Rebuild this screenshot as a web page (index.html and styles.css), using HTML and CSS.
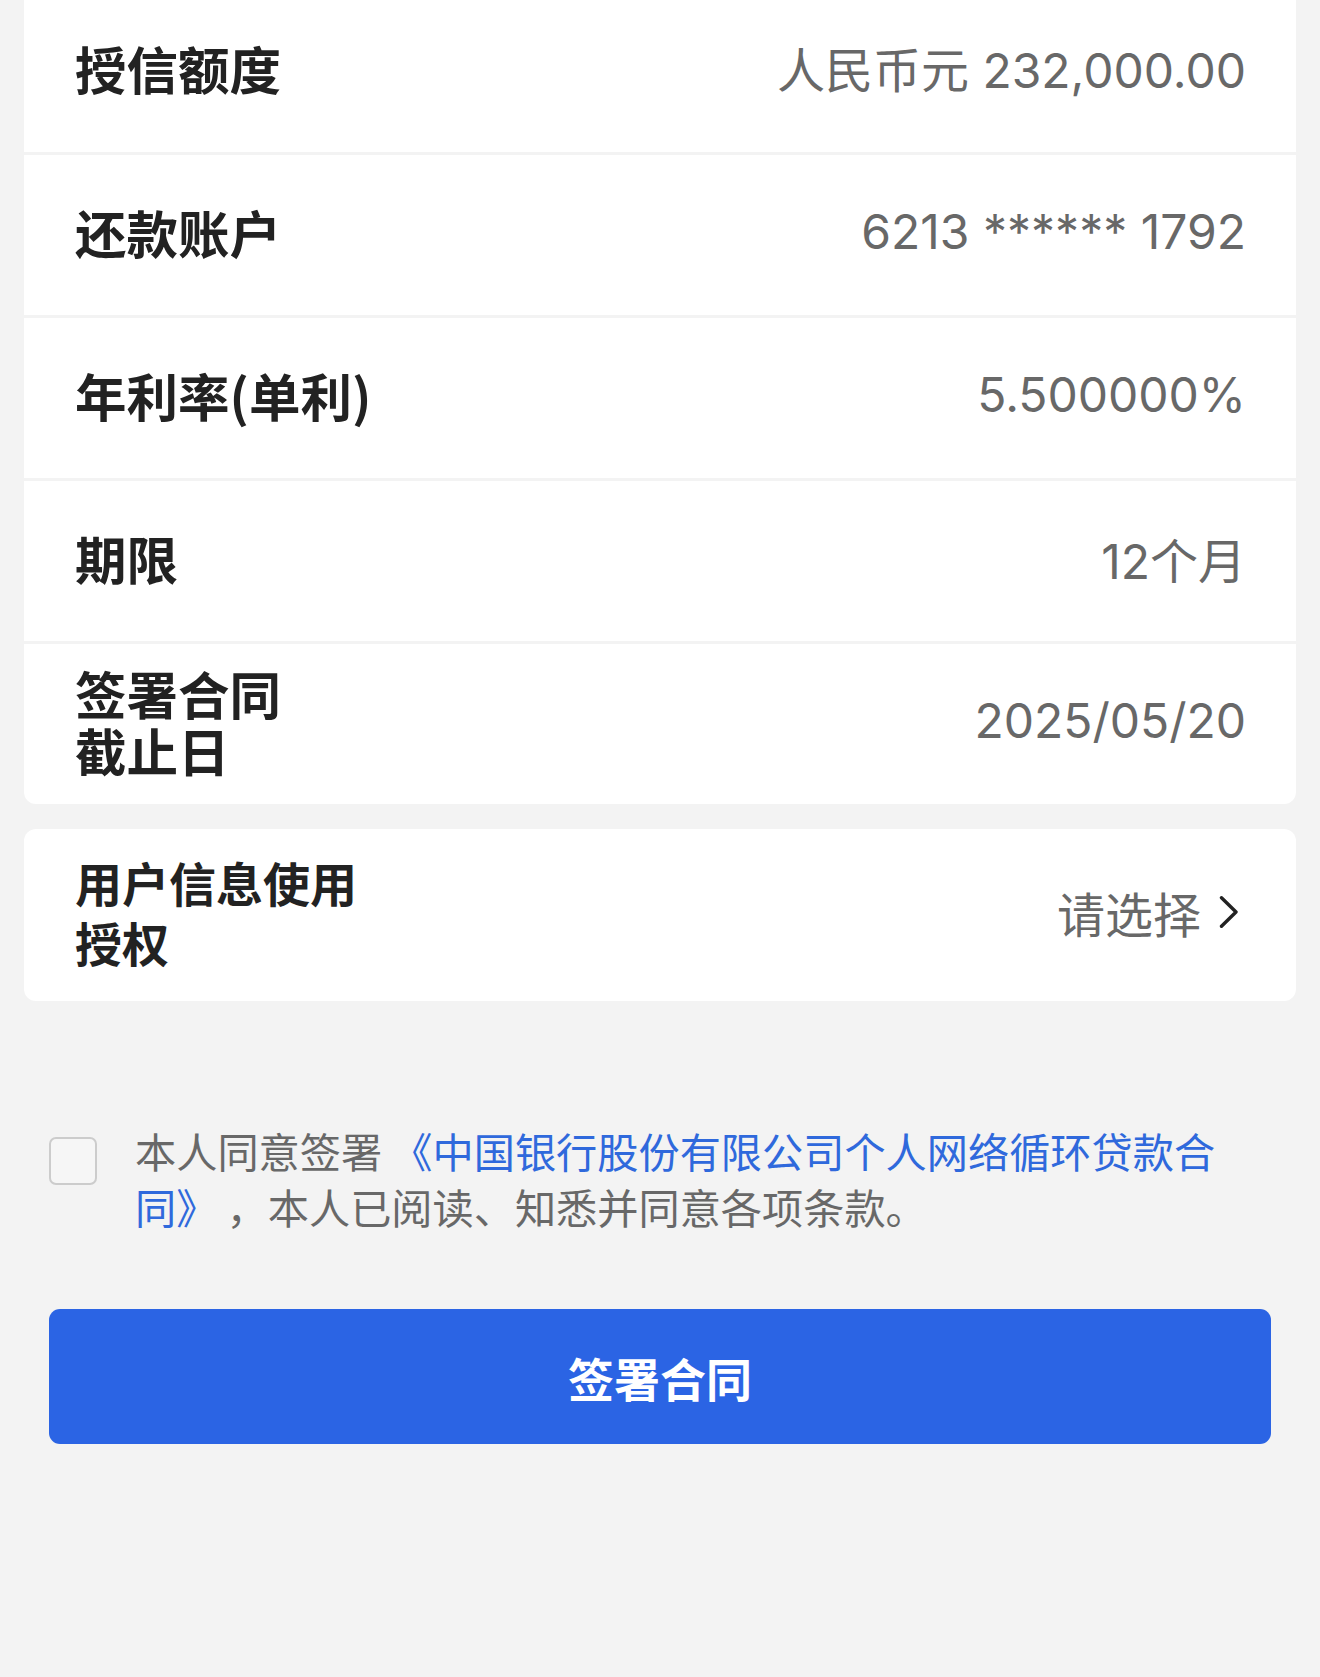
FILE: index.html
```html
<!DOCTYPE html>
<html lang="zh-CN">
<head>
  <meta charset="UTF-8" />
  <meta name="viewport" content="width=device-width, initial-scale=1" />
  <title>签署合同</title>
  <link rel="stylesheet" href="styles.css">
</head>
<body>
  <div class="card card-top">
    <div class="row">
      <span class="label">授信额度</span>
      <span class="value">人民币元 232,000.00</span>
    </div>
    <div class="row">
      <span class="label">还款账户</span>
      <span class="value">6213 ****** 1792</span>
    </div>
    <div class="row">
      <span class="label">年利率(单利)</span>
      <span class="value">5.500000%</span>
    </div>
    <div class="row">
      <span class="label">期限</span>
      <span class="value">12个月</span>
    </div>
    <div class="row">
      <span class="label">签署合同<br>截止日</span>
      <span class="value">2025/05/20</span>
    </div>
  </div>

  <div class="card">
    <div class="row row-link">
      <span class="label">用户信息使用<br>授权</span>
      <span class="value">请选择
        <svg class="chevron" viewBox="0 0 20 32" width="20" height="32">
          <path d="M2.5 1.8 L17 16 L2.5 30.2" fill="none" stroke="#222" stroke-width="3.4" stroke-linecap="round" stroke-linejoin="round"/>
        </svg>
      </span>
    </div>
  </div>

  <div class="agree">
    <span class="checkbox"></span>
    <p class="agree-text">本人同意签署 <a href="#">《中国银行股份有限公司个人网络循环贷款合同》</a> ，本人已阅读、知悉并同意各项条款。</p>
  </div>

  <button class="sign-btn">签署合同</button>
</body>
</html>
```

FILE: styles.css
```css
:root {
  --bg: #f3f3f3;
  --label: #222222;
  --value: #686868;
  --blue: #2b64e4;
  --link: #2f69dc;
}
body {
  margin: 0;
  background: var(--bg);
  font-family: Inter, "Noto Sans CJK SC", sans-serif;
  min-height: 1677px;
}
.card {
  margin: 0 24px;
  background: #fff;
  border-radius: 12px;
  overflow: hidden;
}
.card-top {
  margin-top: -11px;
  margin-bottom: 25px;
}
.row {
  display: flex;
  align-items: center;
  justify-content: space-between;
  min-height: 163px;
  padding: 0 50px 7px 51px;
  box-sizing: border-box;
  border-top: 3px solid var(--bg);
}
.row:first-child {
  border-top: none;
}
.card .row-link {
  min-height: 172px;
  padding-right: 57px;
}
.label {
  font-family: "Noto Sans CJK SC", sans-serif;
  font-weight: 700;
  font-size: 51.5px;
  line-height: 57px;
  color: var(--label);
}
.row-link .label {
  font-size: 47px;
  line-height: 60px;
}
.value {
  display: flex;
  align-items: center;
  font-size: 48px;
  color: var(--value);
  white-space: nowrap;
}
.chevron {
  margin-left: 18px;
}
.agree {
  display: flex;
  align-items: flex-start;
  margin: 136px 100px 0 49px;
}
.checkbox {
  flex: none;
  width: 48px;
  height: 48px;
  box-sizing: border-box;
  border: 2.5px solid #cccccc;
  border-radius: 7px;
  background: #f6f6f6;
  margin-right: 38px;
}
.agree-text {
  margin: -15px 0 0;
  font-family: "Noto Sans CJK SC", sans-serif;
  font-size: 41.2px;
  line-height: 56px;
  color: var(--value);
}
.agree-text a {
  color: var(--link);
  text-decoration: none;
}
.sign-btn {
  display: block;
  width: calc(100% - 98px);
  height: 135px;
  margin: 75px 49px 0;
  border: none;
  border-radius: 11px;
  background: var(--blue);
  color: #fff;
  font-family: "Noto Sans CJK SC", sans-serif;
  font-weight: 700;
  font-size: 46px;
  cursor: pointer;
}
```
